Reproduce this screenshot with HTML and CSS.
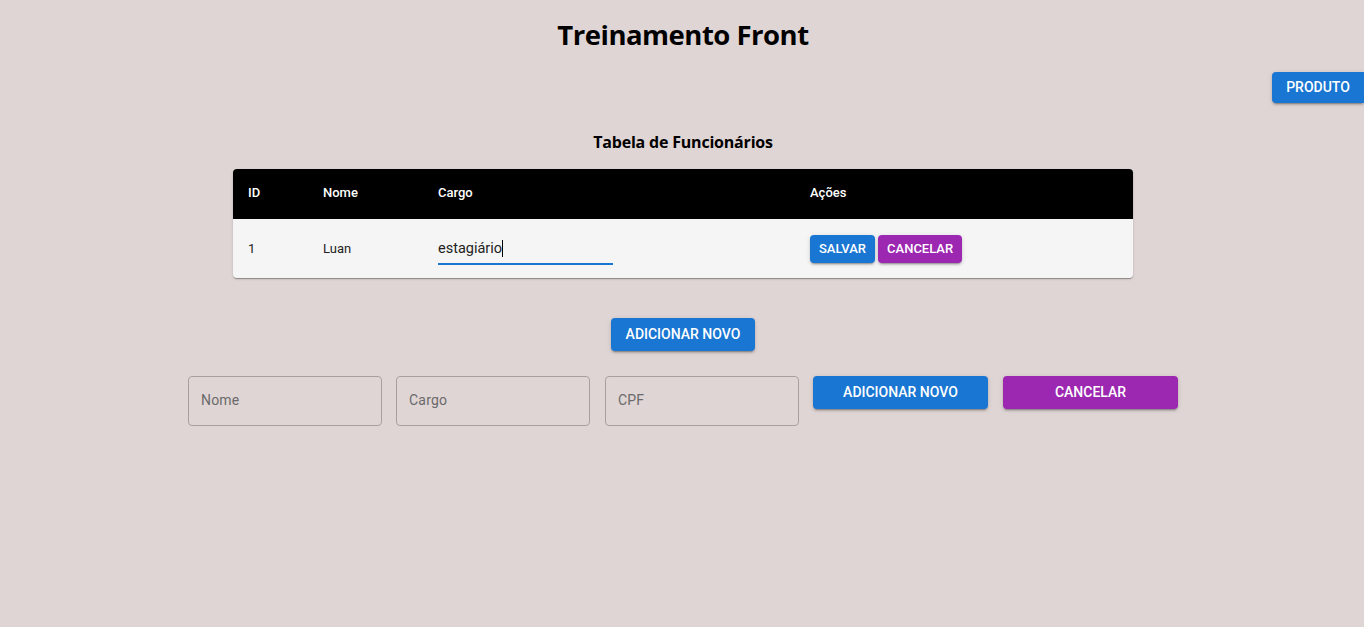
FILE: index.html
```html
<!DOCTYPE html>
<html lang="pt-BR">
<head>
<meta charset="utf-8">
<title>Treinamento Front</title>
<link rel="stylesheet" href="styles.css">
</head>
<body>
<div class="page">
  <h1 class="title">Treinamento Front</h1>
  <div class="top-actions">
    <button class="btn btn-blue btn-produto">PRODUTO</button>
  </div>
  <h2 class="subtitle">Tabela de Funcionários</h2>
  <div class="table-card">
    <table class="table">
      <thead>
        <tr>
          <th class="c-id">ID</th>
          <th class="c-nome">Nome</th>
          <th class="c-cargo">Cargo</th>
          <th>Ações</th>
        </tr>
      </thead>
      <tbody>
        <tr>
          <td>1</td>
          <td>Luan</td>
          <td><div class="edit-field"><span class="edit-text">estagiário</span><span class="caret"></span></div></td>
          <td>
            <div class="row-actions">
              <button class="btn btn-blue btn-small">SALVAR</button>
              <button class="btn btn-purple btn-small">CANCELAR</button>
            </div>
          </td>
        </tr>
      </tbody>
    </table>
  </div>
  <div class="add-wrap">
    <button class="btn btn-blue btn-add">ADICIONAR NOVO</button>
  </div>
  <div class="form-row">
    <div class="field"><span class="placeholder">Nome</span></div>
    <div class="field"><span class="placeholder">Cargo</span></div>
    <div class="field field-cpf"><span class="placeholder">CPF</span></div>
    <button class="btn btn-blue btn-wide">ADICIONAR NOVO</button>
    <button class="btn btn-purple btn-wide btn-cancel">CANCELAR</button>
  </div>
</div>
</body>
</html>
```
FILE: styles.css
```css
* { box-sizing: border-box; }
html, body { margin: 0; padding: 0; }
body {
  background: #e0d5d5;
  font-family: Roboto, "Liberation Sans", Arial, sans-serif;
  color: #000;
  width: 1364px;
  height: 627px;
  overflow: hidden;
}
.page {
  display: flex;
  flex-direction: column;
  align-items: center;
  padding-top: 16px;
  padding-left: 2px;
}
.title {
  margin: 0;
  font-family: "Open Sans", "Noto Sans", sans-serif;
  font-weight: 700;
  font-size: 27.5px;
  line-height: 38px;
  letter-spacing: -0.5px;
}
.top-actions {
  align-self: stretch;
  display: flex;
  justify-content: flex-end;
  margin-top: 18px;
}
.btn {
  border: none;
  color: #fff;
  font-family: Roboto, "Liberation Sans", Arial, sans-serif;
  font-weight: 500;
  border-radius: 4px;
  cursor: pointer;
  box-shadow: 0 3px 1px -2px rgba(0,0,0,0.2), 0 2px 2px 0 rgba(0,0,0,0.14), 0 1px 5px 0 rgba(0,0,0,0.12);
  padding: 0;
}
.btn-blue { background: #1976d2; }
.btn-purple { background: #9c27b0; }
.btn-produto {
  width: 92px;
  height: 31px;
  font-size: 14px;
  padding-bottom: 1px;
  border-radius: 4px 0 0 4px;
}
.subtitle {
  margin: 28px 0 0;
  font-family: "Open Sans", "Noto Sans", sans-serif;
  font-weight: 700;
  font-size: 16px;
  line-height: 22px;
  letter-spacing: -0.2px;
}
.table-card {
  margin-top: 16px;
  width: 900px;
  background: #f5f5f5;
  border-radius: 4px;
  overflow: hidden;
  box-shadow: 0 2px 1px -1px rgba(0,0,0,0.2), 0 1px 1px 0 rgba(0,0,0,0.14), 0 1px 3px 0 rgba(0,0,0,0.12);
}
.table {
  width: 100%;
  border-collapse: collapse;
  font-size: 13px;
}
.table th {
  background: #000;
  color: #fff;
  text-align: left;
  font-weight: 500;
  height: 50px;
  padding: 0 0 4px 15px;
  font-size: 13px;
}
.table td {
  height: 59px;
  padding: 0 0 0 15px;
  color: #222;
}
.c-id { width: 75px; }
.c-nome { width: 115px; }
.c-cargo { width: 372px; }
.edit-field {
  width: 175px;
  height: 30px;
  border-bottom: 2px solid #1976d2;
  display: flex;
  align-items: center;
  margin-top: 2px;
}
.edit-text {
  font-size: 14.5px;
  color: #222;
}
.caret {
  display: inline-block;
  width: 1px;
  height: 17px;
  background: #000;
}
.row-actions {
  display: flex;
  gap: 3px;
}
.btn-small {
  height: 28px;
  font-size: 13px;
  padding: 0 9px;
}
.add-wrap {
  margin-top: 40px;
}
.btn-add {
  width: 144px;
  height: 33px;
  font-size: 14px;
  padding-bottom: 2px;
}
.form-row {
  margin-top: 25px;
  display: flex;
  align-items: flex-start;
  gap: 14px;
}
.field {
  width: 194px;
  height: 50px;
  border: 1px solid #a8a0a0;
  border-radius: 4px;
  display: flex;
  align-items: center;
  padding: 0 0 2px 12px;
}
.field-cpf { margin-left: 1px; }
.placeholder {
  font-size: 14px;
  color: #6a6a6a;
  letter-spacing: 0.2px;
}
.btn-wide {
  width: 175px;
  height: 33px;
  font-size: 14px;
  padding-bottom: 2px;
}
.btn-cancel { margin-left: 1px; }
```
